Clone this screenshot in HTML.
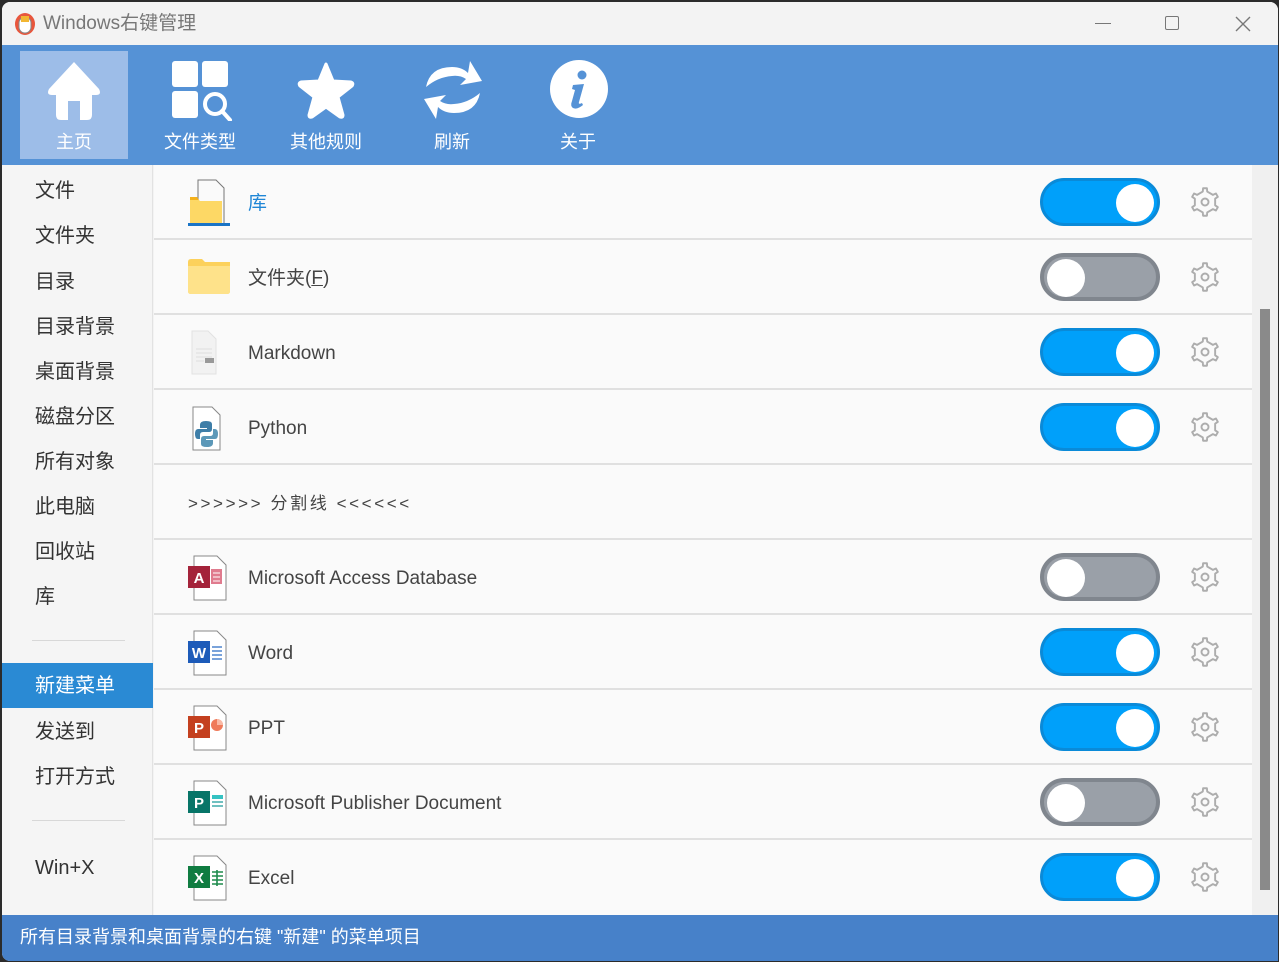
<!DOCTYPE html>
<html><head><meta charset="utf-8"><style>
*{margin:0;padding:0;box-sizing:border-box}
body{width:1279px;height:962px;background:#2b2b2b;font-family:"Liberation Sans","Noto Sans CJK SC",sans-serif;position:relative;overflow:hidden}
.win{position:absolute;left:2px;top:2px;width:1276px;height:959px;background:#f3f3f3;border-radius:8px 8px 0 8px;overflow:hidden}
.abs{position:absolute}
.title{left:0;top:0;width:100%;height:43px;background:#f3f3f3}
.tb{left:0;top:43px;width:100%;height:120px;background:#5592d6}
.tab{position:absolute;top:6px;width:108px;height:108px;color:#fff;font-size:18px;text-align:center}
.tab span{position:absolute;left:0;right:0;top:77px}
.tab svg{position:absolute;left:24px;top:8px}
.side{left:0;top:163px;width:151px;height:750px;background:#f5f5f5;border-right:1px solid #e2e2e2}
.si{position:absolute;left:33px;font-size:20px;color:#333;line-height:24px}
.sep{position:absolute;left:30px;width:93px;height:1px;background:#d8d8d8}
.main{left:152px;top:163px;width:1098px;height:750px;background:#fafafa}
.row{position:absolute;left:0;width:1098px;height:75px;border-bottom:2px solid #e0e0e0}
.row .t{position:absolute;left:94px;top:26px;font-size:19px;color:#444;line-height:26px}
.tg{position:absolute;left:886px;top:13px;width:120px;height:48px;border-radius:24px}
.tg.on{background:#00a0fa;border:3px solid #0a8ad8}
.tg.off{background:#9aa0a8;border:4px solid #80868e}
.tg i{position:absolute;top:3px;width:38px;height:38px;border-radius:50%;background:#fff}
.tg.on i{right:3px}
.tg.off i{left:3px;top:2px}
.ico{position:absolute;left:34px;top:14px}
.status{left:0;top:913px;width:100%;height:46px;background:#4781c9;color:#fff;font-size:18px;line-height:44px;padding-left:18px}
</style></head><body>
<div class="win">
<div class="abs title">
 <svg class="abs" style="left:12px;top:9px" width="22" height="24" viewBox="0 0 22 24"><ellipse cx="11" cy="13" rx="10" ry="11" fill="#e8563c"/><rect x="5" y="6" width="12" height="16" rx="6" fill="#fff" stroke="#888"/><rect x="7" y="5" width="8" height="6" fill="#f2b632"/></svg>
 <div class="abs" style="left:41px;top:6px;font-size:19px;color:#777">Windows右键管理</div>
 <div class="abs" style="left:1093px;top:21px;width:16px;height:1px;background:#777"></div>
 <div class="abs" style="left:1163px;top:14px;width:14px;height:14px;border:1.5px solid #777;border-radius:2px"></div>
 <svg class="abs" style="left:1233px;top:14px" width="16" height="16"><path d="M1 1L15 15M15 1L1 15" stroke="#777" stroke-width="1.4"/></svg>
</div>
<div class="abs tb">
 <div class="tab" style="left:18px;background:#9dbde8">
  <svg width="60" height="62" viewBox="0 0 60 62"><path d="M30 3 L55 30 Q58 36 52 36 L48 36 L48 56 Q48 61 43 61 L36 61 L36 42 L24 42 L24 61 L17 61 Q12 61 12 56 L12 36 L8 36 Q2 36 5 30 Z" fill="#fff"/></svg><span>主页</span></div>
 <div class="tab" style="left:144px">
  <svg width="64" height="62" viewBox="0 0 64 62"><rect x="2" y="2" width="26" height="26" rx="3" fill="#fff"/><rect x="32" y="2" width="26" height="26" rx="3" fill="#fff"/><rect x="2" y="32" width="26" height="27" rx="3" fill="#fff"/><circle cx="45" cy="45" r="10" fill="none" stroke="#fff" stroke-width="4"/><path d="M52 52L60 61" stroke="#fff" stroke-width="4" stroke-linecap="round"/></svg><span>文件类型</span></div>
 <div class="tab" style="left:270px">
  <svg width="60" height="62" viewBox="0 0 60 62"><path d="M30 5 L37 22 L55 23 Q58 24 56 27 L42 38 L47 56 Q47 59 44 58 L30 48 L16 58 Q13 59 13 56 L18 38 L4 27 Q2 24 5 23 L23 22 Z" fill="#fff" stroke="#fff" stroke-width="3" stroke-linejoin="round"/></svg><span>其他规则</span></div>
 <div class="tab" style="left:396px">
  <svg width="62" height="62" viewBox="0 0 62 62"><path d="M4 28 Q8 8 30 8 Q40 8 46 14 L48 2 L60 22 L38 26 L44 20 Q38 16 30 17 Q16 18 4 28Z" fill="#fff"/><path d="M58 34 Q54 54 32 54 Q22 54 16 48 L14 60 L2 40 L24 36 L18 42 Q24 46 32 45 Q46 44 58 34Z" fill="#fff"/></svg><span>刷新</span></div>
 <div class="tab" style="left:522px">
  <svg width="62" height="62" viewBox="0 0 62 62"><ellipse cx="31" cy="30" rx="29" ry="29" fill="#fff"/><circle cx="34" cy="16" r="4.5" fill="#5592d6"/><path d="M25 26 L36 25 L31 43 Q30 46 34 44 L35 46 Q29 51 25 49 Q22 47 24 42 L27 31 L24 30Z" fill="#5592d6"/></svg><span>关于</span></div>
</div>
<div class="abs side">
 <div class="si" style="top:14px">文件</div>
 <div class="si" style="top:59px">文件夹</div>
 <div class="si" style="top:105px">目录</div>
 <div class="si" style="top:150px">目录背景</div>
 <div class="si" style="top:195px">桌面背景</div>
 <div class="si" style="top:240px">磁盘分区</div>
 <div class="si" style="top:285px">所有对象</div>
 <div class="si" style="top:330px">此电脑</div>
 <div class="si" style="top:375px">回收站</div>
 <div class="si" style="top:420px">库</div>
 <div class="sep" style="top:475px"></div>
 <div class="abs" style="left:0;top:498px;width:151px;height:45px;background:#2a8ad4"></div>
 <div class="si" style="top:509px;color:#fff">新建菜单</div>
 <div class="si" style="top:555px">发送到</div>
 <div class="si" style="top:600px">打开方式</div>
 <div class="sep" style="top:655px"></div>
 <div class="si" style="top:691px">Win+X</div>
</div>
<div class="abs main">
 <div class="row" style="top:0">
  <svg class="ico" width="44" height="48" viewBox="0 0 44 48"><path d="M10 1H28L36 9V45H10Z" fill="#fafafa" stroke="#777"/><path d="M2 20H10L12 22H34V44H2Z" fill="#fdd865"/><path d="M2 18H9L11 21H2Z" fill="#f5b21c"/><rect x="0" y="44" width="42" height="3" fill="#1a74c6"/></svg>
  <div class="t" style="color:#1f86d6">库</div>
  <div class="tg on"><i></i></div>
 </div>
 <div class="row" style="top:75px">
  <svg class="ico" style="top:18px" width="44" height="40" viewBox="0 0 44 40"><path d="M0 4Q0 1 3 1H14L17 4H42V33Q42 36 39 36H3Q0 36 0 33Z" fill="#fcd15c"/><path d="M0 8H42V33Q42 36 39 36H3Q0 36 0 33Z" fill="#fee28a"/></svg>
  <div class="t">文件夹(<u>F</u>)</div>
  <div class="tg off"><i></i></div>
 </div>
 <div class="row" style="top:150px">
  <svg class="ico" width="44" height="48" viewBox="0 0 44 48"><path d="M4 2H20L28 10V45H4Z" fill="#f2f2f2" stroke="#e2e2e2"/><path d="M8 20H24M8 24H24M8 28H24M8 32H16" stroke="#ddd"/><rect x="17" y="29" width="9" height="5" fill="#999"/></svg>
  <div class="t">Markdown</div>
  <div class="tg on"><i></i></div>
 </div>
 <div class="row" style="top:225px">
  <svg class="ico" width="44" height="48" viewBox="0 0 44 48"><path d="M5 3H24L32 11V46H5Z" fill="#fff" stroke="#888"/><path d="M18 17Q12 17 12 21V24H19V25H10Q7 25 7 30Q7 35 10 35H12V31Q12 28 15 28H21Q24 28 24 25V20Q24 17 18 17Z" fill="#3e7ea8"/><path d="M19 43Q25 43 25 39V36H18V35H27Q30 35 30 30Q30 25 27 25H25V29Q25 32 22 32H16Q13 32 13 35V40Q13 43 19 43Z" fill="#5c98b8"/></svg>
  <div class="t">Python</div>
  <div class="tg on"><i></i></div>
 </div>
 <div class="row" style="top:300px">
  <div class="t" style="left:34px;font-size:17px;letter-spacing:2.6px">&gt;&gt;&gt;&gt;&gt;&gt; 分割线 &lt;&lt;&lt;&lt;&lt;&lt;</div>
 </div>
 <div class="row" style="top:375px">
  <svg class="ico" width="44" height="48" viewBox="0 0 44 48"><path d="M6 2H29L38 11V46H6Z" fill="#fff" stroke="#888"/><rect x="0" y="12" width="22" height="22" fill="#a4233a"/><text x="11" y="29" font-size="15" font-weight="bold" fill="#fff" text-anchor="middle" font-family="Liberation Sans">A</text><rect x="23" y="15" width="11" height="15" fill="#e07b8e"/><path d="M25 19H32M25 23H32M25 27H32" stroke="#fff"/></svg>
  <div class="t">Microsoft Access Database</div>
  <div class="tg off"><i></i></div>
 </div>
 <div class="row" style="top:450px">
  <svg class="ico" width="44" height="48" viewBox="0 0 44 48"><path d="M6 2H29L38 11V46H6Z" fill="#fff" stroke="#888"/><rect x="0" y="12" width="22" height="22" fill="#1d5bb9"/><text x="11" y="29" font-size="15" font-weight="bold" fill="#fff" text-anchor="middle" font-family="Liberation Sans">W</text><path d="M24 18H34M24 22H34M24 26H34M24 30H34" stroke="#2b6cc4" stroke-width="1.3"/></svg>
  <div class="t">Word</div>
  <div class="tg on"><i></i></div>
 </div>
 <div class="row" style="top:525px">
  <svg class="ico" width="44" height="48" viewBox="0 0 44 48"><path d="M6 2H29L38 11V46H6Z" fill="#fff" stroke="#888"/><rect x="0" y="12" width="22" height="22" fill="#c4401f"/><text x="11" y="29" font-size="15" font-weight="bold" fill="#fff" text-anchor="middle" font-family="Liberation Sans">P</text><circle cx="29" cy="21" r="6" fill="#ef7a5a"/><path d="M29 15A6 6 0 0 1 35 21H29Z" fill="#f9b9a5"/></svg>
  <div class="t">PPT</div>
  <div class="tg on"><i></i></div>
 </div>
 <div class="row" style="top:600px">
  <svg class="ico" width="44" height="48" viewBox="0 0 44 48"><path d="M6 2H29L38 11V46H6Z" fill="#fff" stroke="#888"/><rect x="0" y="12" width="22" height="22" fill="#077568"/><text x="11" y="29" font-size="15" font-weight="bold" fill="#fff" text-anchor="middle" font-family="Liberation Sans">P</text><rect x="24" y="16" width="11" height="4" fill="#36c3c3"/><path d="M24 23H35M24 27H35" stroke="#1a9a9a" stroke-width="1.3"/></svg>
  <div class="t">Microsoft Publisher Document</div>
  <div class="tg off"><i></i></div>
 </div>
 <div class="row" style="top:675px;border-bottom:none">
  <svg class="ico" width="44" height="48" viewBox="0 0 44 48"><path d="M6 2H29L38 11V46H6Z" fill="#fff" stroke="#888"/><rect x="0" y="12" width="22" height="22" fill="#107c41"/><text x="11" y="29" font-size="15" font-weight="bold" fill="#fff" text-anchor="middle" font-family="Liberation Sans">X</text><path d="M24 18H35M24 22H35M24 26H35M24 30H35M29 16V32" stroke="#1e8a4c" stroke-width="1.6"/></svg>
  <div class="t">Excel</div>
  <div class="tg on"><i></i></div>
 </div>
</div>
<div class="abs" style="left:1250px;top:163px;width:26px;height:750px;background:#f0f0f0"></div>
<div class="abs" style="left:1258px;top:307px;width:10px;height:581px;background:#8a8a8a"></div>
<div class="abs status">所有目录背景和桌面背景的右键 "新建" 的菜单项目</div>
</div>
<svg width="0" height="0" style="position:absolute"><defs><g id="g"><path d="M12.92 5.22L13.19 2.13L16.81 2.13L17.08 5.22L22.43 8.31L25.24 6.99L27.05 10.13L24.51 11.91L24.51 18.09L27.05 19.87L25.24 23.01L22.43 21.69L17.08 24.78L16.81 27.87L13.19 27.87L12.92 24.78L7.57 21.69L4.76 23.01L2.95 19.87L5.49 18.09L5.49 11.91L2.95 10.13L4.76 6.99L7.57 8.31Z" fill="none" stroke="#adadad" stroke-width="1.8" stroke-linejoin="round"/><circle cx="15" cy="15" r="3.3" fill="none" stroke="#adadad" stroke-width="1.8"/></g></defs></svg>
<div style="position:absolute;left:0;top:0">
<svg class="abs" style="left:1189px;top:186px" width="32" height="32" viewBox="0 0 30 30"><use href="#g"/></svg>
<svg class="abs" style="left:1189px;top:261px" width="32" height="32" viewBox="0 0 30 30"><use href="#g"/></svg>
<svg class="abs" style="left:1189px;top:336px" width="32" height="32" viewBox="0 0 30 30"><use href="#g"/></svg>
<svg class="abs" style="left:1189px;top:411px" width="32" height="32" viewBox="0 0 30 30"><use href="#g"/></svg>
<svg class="abs" style="left:1189px;top:561px" width="32" height="32" viewBox="0 0 30 30"><use href="#g"/></svg>
<svg class="abs" style="left:1189px;top:636px" width="32" height="32" viewBox="0 0 30 30"><use href="#g"/></svg>
<svg class="abs" style="left:1189px;top:711px" width="32" height="32" viewBox="0 0 30 30"><use href="#g"/></svg>
<svg class="abs" style="left:1189px;top:786px" width="32" height="32" viewBox="0 0 30 30"><use href="#g"/></svg>
<svg class="abs" style="left:1189px;top:861px" width="32" height="32" viewBox="0 0 30 30"><use href="#g"/></svg>
</div>
</body></html>
